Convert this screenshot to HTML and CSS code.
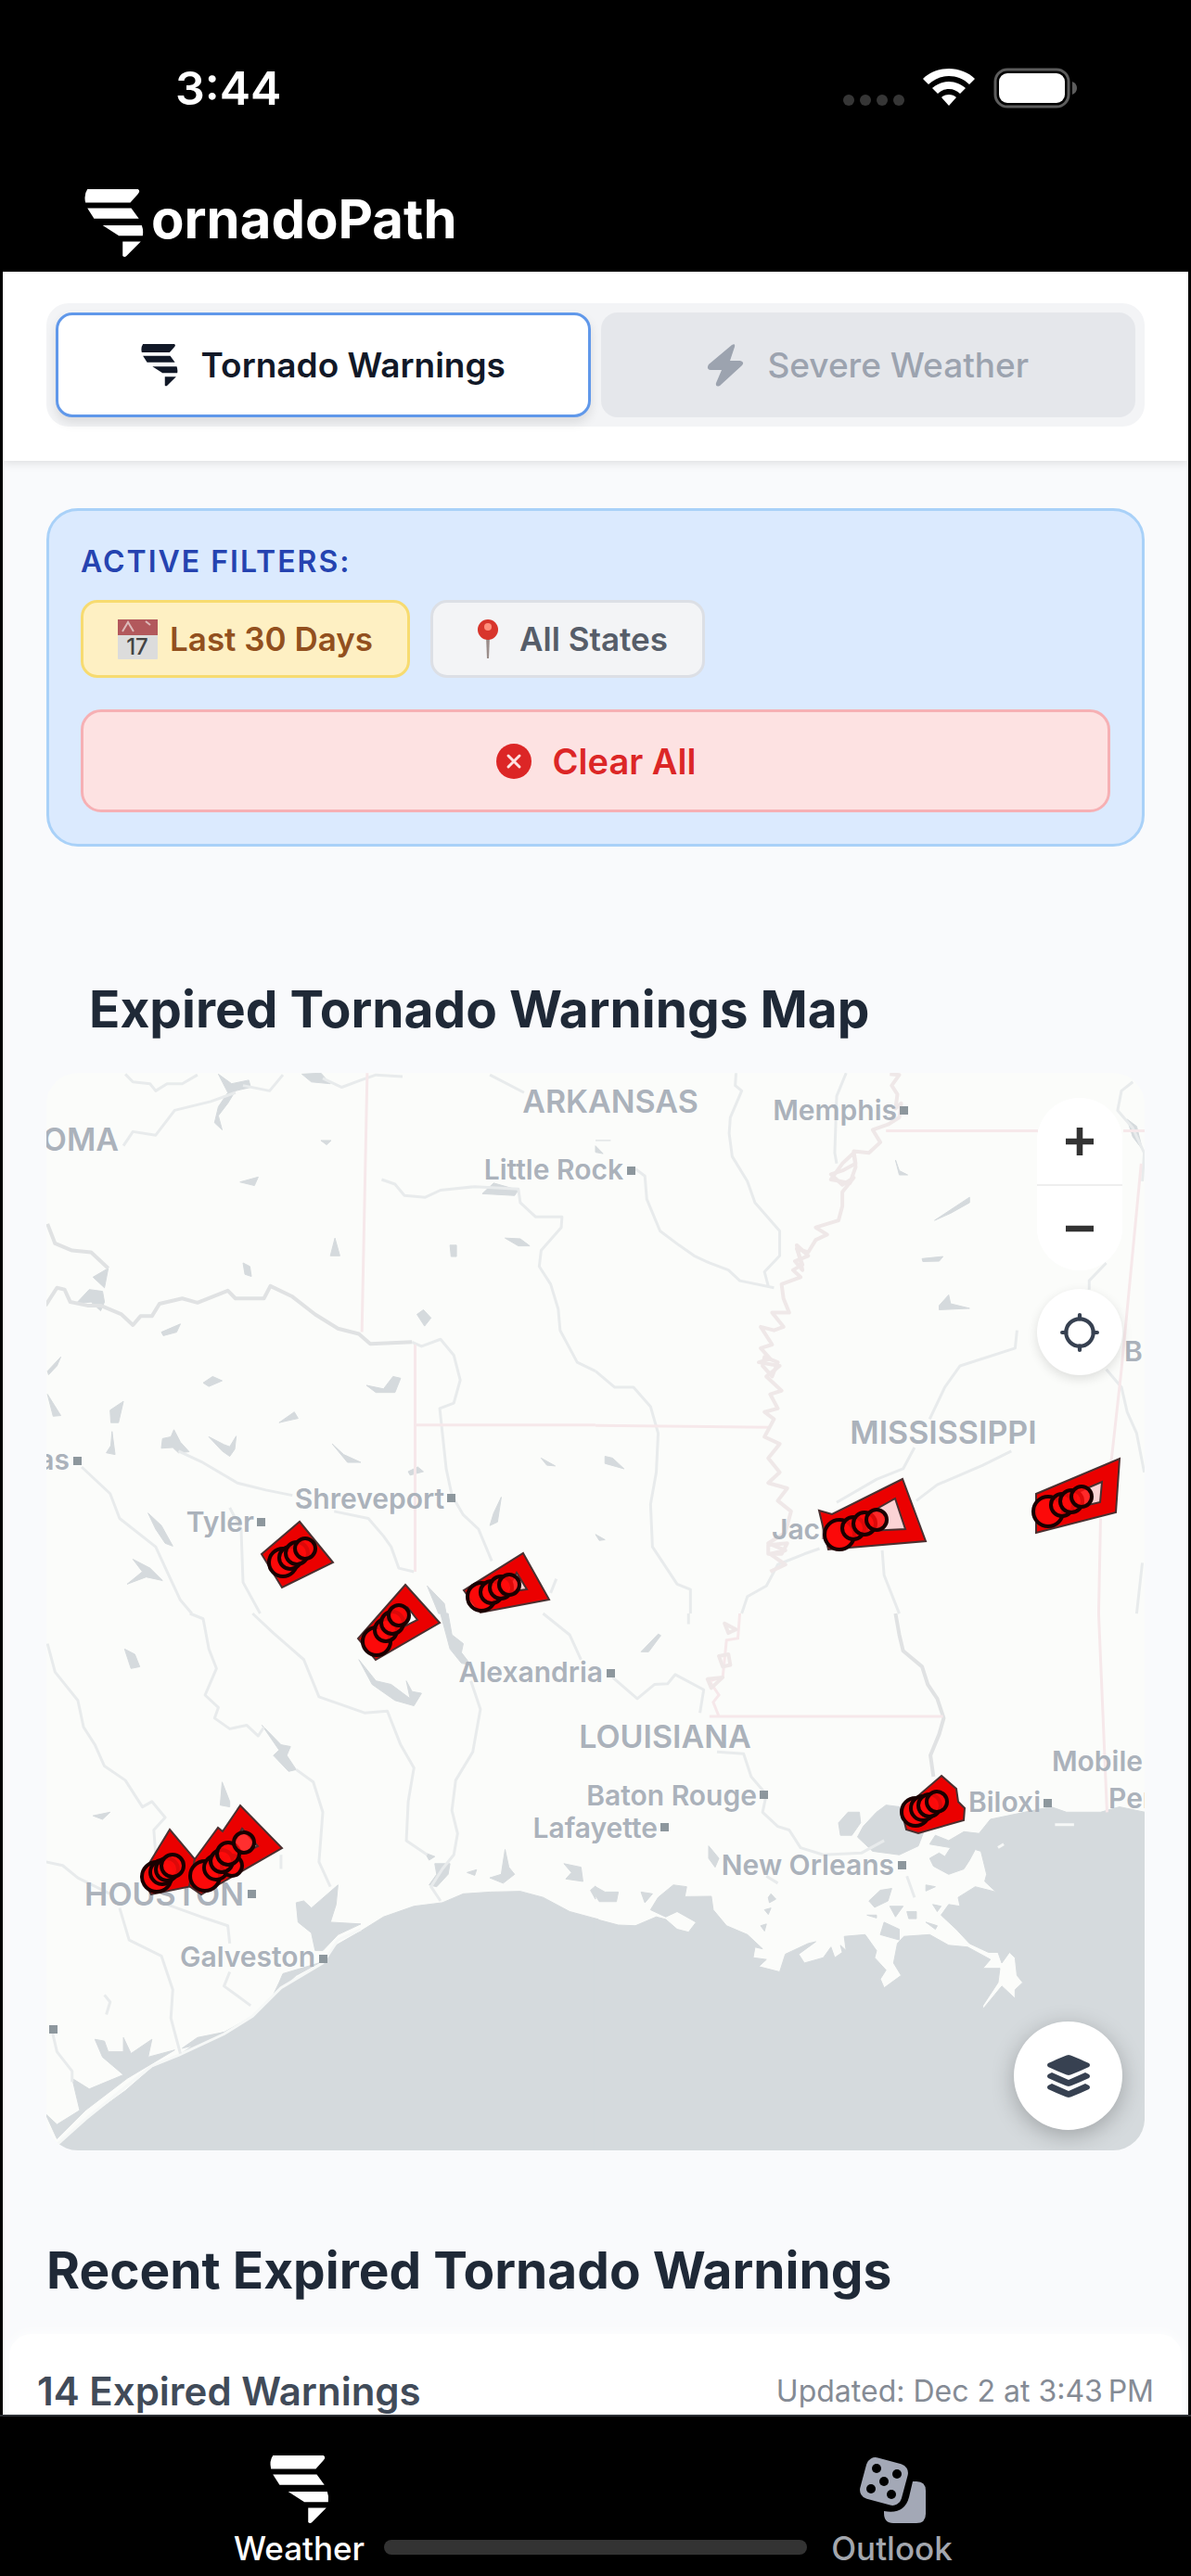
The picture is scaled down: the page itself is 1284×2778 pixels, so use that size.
FILE: index.html
```html
<!DOCTYPE html>
<html lang="en">
<head>
  <meta charset="utf-8">
  <meta name="viewport" content="width=device-width, initial-scale=1">
  <title>TornadoPath</title>
  <link rel="stylesheet" href="styles.css">
</head>
<body>

  <!-- shared tornado mark -->
  <svg class="defs" aria-hidden="true">
    <symbol id="tornado" viewBox="0 0 62 72">
      <path d="M3 0H56Q59 2 56 5L48 14H1Q-1 6 3 0ZM3 20H49L57 31H10ZM19 38H60Q62 43 61 49H36ZM40 55H59L44 70Q42 72 40 70Z"/>
    </symbol>
  </svg>

  <div class="app">
    <header class="top">
      <div class="status">
        <span class="time">3:44</span>
        <div class="status-icons">
          <span class="cell"><i></i><i></i><i></i><i></i></span>
          <svg class="wifi" viewBox="0 0 56 42">
            <path d="M28 0C17 0 7 4 0 11L6 17C12 11 20 8 28 8S44 11 50 17L56 11C49 4 39 0 28 0Z"/>
            <path d="M28 14C21 14 15 17 10 21L16 27C19 24 23 22 28 22S37 24 40 27L46 21C41 17 35 14 28 14Z"/>
            <path d="M28 28C25 28 22 29 20 31L28 40L36 31C34 29 31 28 28 28Z"/>
          </svg>
          <svg class="battery" viewBox="0 0 90 44">
            <rect x="2" y="2" width="79" height="40" rx="13" fill="none" stroke="#5c5c5c" stroke-width="3"/>
            <rect x="6" y="6" width="71" height="32" rx="9" fill="#fff"/>
            <path d="M85 15Q90 17 90 22T85 29Z" fill="#5c5c5c"/>
          </svg>
        </div>
      </div>
      <div class="brand">
        <svg class="brand-icon"><use href="#tornado"/></svg>
        <span class="brand-name">ornadoPath</span>
      </div>
    </header>

    <nav class="switcher">
      <div class="tabs">
        <button class="tab active" type="button">
          <svg class="tab-icon"><use href="#tornado"/></svg>
          Tornado Warnings
        </button>
        <button class="tab" type="button">
          <svg class="tab-icon" viewBox="0 0 40 46"><path d="M27 1Q31-1 30 3L25 18H36Q41 19 38 23L14 45Q9 47 10 42L16 28H4Q-1 27 2 22Z"/></svg>
          Severe Weather
        </button>
      </div>
    </nav>

    <main>
      <section class="filters">
        <h3 class="filters-title">Active Filters:</h3>
        <div class="chips">
          <span class="chip chip-date">
            <svg class="emoji" viewBox="0 0 43 43">
              <rect width="43" height="43" rx="1" fill="#dcdcdc"/>
              <rect width="43" height="17" fill="#b2585c"/>
              <path d="M5 13L11 3L17 13M30 2L35 6" stroke="#dcb9b9" stroke-width="2" fill="none"/>
              <text x="21" y="38" class="cal-day">17</text>
            </svg>
            Last 30 Days
          </span>
          <span class="chip">
            <svg class="emoji" viewBox="0 0 43 43">
              <path d="M20 18H24L23 42H21Z" fill="#9a8d8a"/>
              <circle cx="22" cy="11" r="11" fill="#d8352c"/>
              <circle cx="22" cy="8" r="4" fill="#ff8f7c"/>
            </svg>
            All States
          </span>
        </div>
        <button class="clear" type="button">
          <svg class="clear-icon" viewBox="0 0 40 40">
            <circle cx="20" cy="20" r="19" fill="#dc2626"/>
            <path d="M14 14L26 26M26 14L14 26" stroke="#fee2e2" stroke-width="3" stroke-linecap="round"/>
          </svg>
          Clear All
        </button>
      </section>

      <h2 class="map-title">Expired Tornado Warnings Map</h2>

      <div class="map">
        <svg class="map-canvas" viewBox="0 0 1184 1162" preserveAspectRatio="xMidYMid slice">
          <!-- north west tile -->
          <g class="tile" transform="translate(-50 -17) scale(.4094 .3827)">
            <g class="water">
              <path d="M795 48L845 45L870 75L820 70ZM575 48L610 75L655 65L660 85L620 95L600 130L575 165L585 205L565 185L575 140L600 100ZM845 235H872L860 247ZM632 352L680 338L670 362ZM640 580L658 590L662 618L645 612ZM882 510L895 560L870 560ZM1098 725L1115 712L1135 735L1118 758ZM1185 530H1202V562H1188ZM1330 510L1370 512L1395 532L1365 532ZM425 775L475 752L465 775L430 785ZM535 918L560 900L585 912L550 928ZM965 925L1010 935L1035 900L1055 905L1040 945L990 945ZM125 885L160 845L150 870L128 895ZM125 950L160 1010L140 1012ZM290 995L325 970L312 1030L292 1030ZM295 1055L303 1120L280 1115L292 1095ZM428 1075L450 1070L458 1050L475 1085L498 1112L470 1115L455 1100L425 1102ZM550 1070L590 1092L605 1098L622 1068L618 1105L605 1125L585 1110ZM735 1030L775 1000L785 1018L755 1025ZM875 1090L905 1120L950 1142L915 1142ZM1075 1168L1100 1155L1115 1168L1080 1178ZM1425 1130L1462 1152L1440 1150ZM1320 1240L1310 1310L1290 1320L1300 1285ZM390 1285L425 1320L455 1378L435 1370L410 1330ZM350 1415L395 1440L428 1475L385 1465L335 1485L375 1450ZM1300 355L1365 375L1355 390L1270 385ZM1125 1490L1170 1540L1175 1568H1155Z"/>
              <path d="M235 655L270 660L275 690L265 715L240 690L200 695ZM245 620L285 595L275 650Z"/>
            </g>
            <g class="river">
              <path d="M330 48L350 70L395 75L410 95L440 75H480L520 50M620 100L555 125L460 150L410 220L350 210L325 250M640 80L710 95L745 50M850 60L900 85L950 65L990 50L1060 55"/>
              <path d="M125 470L145 525L190 545L240 550L285 595M120 700L150 650L170 655L185 690L230 700L265 700L320 725L350 755L370 730L400 730L420 695L480 680L520 692L600 658L620 680L695 680L712 645L770 675L830 725L890 765L945 780L975 808L1085 803"  class="wide"/>
              <path d="M1085 803L1110 815L1160 795L1195 840L1212 910L1195 975L1158 990L1165 1060L1175 1160L1190 1235L1220 1290L1260 1330L1295 1420"/>
              <path d="M1005 345L1040 358L1065 390L1120 395L1160 375L1250 365L1365 372L1370 410L1410 450L1480 450L1478 480L1425 545L1420 590L1450 640L1470 710L1475 770L1520 860L1568 885"/>
              <path d="M470 1110L530 1140L625 1200L700 1220L770 1235M880 1280L970 1300L1010 1350L1030 1380L1050 1440L1090 1450M215 1155L290 1230L315 1300L410 1380L440 1450L475 1530L505 1568M605 1270L635 1330L640 1480L685 1568M1290 50L1380 100M1465 1470L1450 1510"/>
            </g>
            <path class="border" d="M967 45L953 775M1093 810V1450M1093 1037H1568"/>
          </g>

          <!-- north east tile -->
          <g class="tile" transform="translate(592 -17) scale(.4094 .3827)">
            <g class="water">
              <path d="M893 460L985 395L985 410L935 440ZM790 290L800 320L822 332L800 332ZM860 568L915 562L905 575L862 576ZM905 700L930 670L935 695L985 708L905 712ZM0 235L40 235M0 250L20 272L0 268ZM25 1125L45 1130L75 1160L25 1145ZM0 1345L25 1360L10 1362ZM1400 175L1425 195L1440 260L1415 225Z"/>
            </g>
            <g class="river">
              <path d="M370 45L368 80L385 95L355 170L352 215L360 280L400 350L420 410L485 490L485 560L445 605L455 645M105 315L130 335L135 400L170 490L220 530L260 560L300 580L350 600L380 630L470 650"/>
              <path d="M660 45L635 110L630 270L635 300M0 885L50 930L100 930L145 985L165 1060L160 1170L145 1260L150 1380L215 1485L250 1500V1568M1110 770L1105 820L960 870L920 930L880 1020M840 1100L810 1160L740 1190L635 1255M1095 1110L1020 1150L900 1205L845 1250M755 1390L760 1460L800 1568M1415 70L1385 95L1375 150L1415 200L1445 270L1440 350M1345 580L1300 630V655M1345 880L1385 930L1400 1000L1425 1060L1445 1170M1440 1425L1425 1568M590 1385L550 1400L480 1430L450 1490L400 1520L385 1568"/>
            </g>
            <g class="border">
              <path d="M765 208H1165M1390 208H1450M1437 300L1385 880L1355 1170M1330 1300L1325 1568M0 1038L460 1043"/>
              <path class="winding" d="M775 48L800 50L780 80L795 105L790 145L805 130L800 170L770 190L730 205L750 240L720 270L680 265L685 300L650 320L620 330L650 360L680 340L650 380L650 420L640 460L580 480L610 500L580 515L560 550L530 540L545 585L520 600L540 620L490 640L495 680L510 720L465 720L495 760L470 770L435 760L465 810L435 820L460 850L430 860L485 870L450 900L490 940L460 950L480 990L445 1000L470 1020L445 1070L485 1090L455 1130L485 1170L455 1200L505 1215L480 1250L515 1280L500 1340L455 1370L500 1390L460 1400L500 1430L460 1450"/>
              <path class="winding" d="M680 270L650 300L620 345L670 355L685 310ZM530 530L560 560L525 575L545 600ZM445 845L480 860L465 900L440 870ZM455 1375L505 1370L490 1400L455 1400Z"/>
            </g>
          </g>

          <!-- south west tile -->
          <g class="tile" transform="translate(-50 583) scale(.4094 .3827)">
            <g class="water">
              <path d="M100 1530V1515L155 1497L220 1430L330 1345L400 1280L470 1245L540 1195L590 1180L665 1135L705 1090L740 1055L800 1015L850 985L885 935L950 895L1010 855L1090 825L1165 815L1220 790L1290 785L1370 783L1430 800L1500 840L1576 862V1530Z"/>
              <path d="M780 815L800 810L820 830L890 765L885 820L870 870L950 875L890 905L850 950L830 950L820 900L785 870ZM745 1015L840 985L780 1020L715 1085L735 1040ZM480 1225L520 1195L590 1180L540 1210Z"/>
              <path d="M250 1200L275 1205L285 1235L325 1235L325 1195L345 1240L400 1200L390 1250L460 1230L335 1310L225 1400L150 1480L120 1410L150 1440L210 1400L190 1310L235 1340L325 1300L270 1250Z"/>
              <path d="M690 315L740 370L765 375L755 400L780 440L760 445L720 400L735 385ZM1160 0H1180L1190 60L1220 85L1215 110L1240 145L1215 140L1185 100ZM945 130L990 190L1030 200L1080 240L1070 190L1085 220L1110 225L1090 260L1040 245L980 200ZM1145 705H1185L1180 735L1150 770L1130 765L1150 735ZM1330 665L1340 715L1355 735L1325 760L1290 745L1320 735ZM1485 705L1530 715L1535 755L1490 748L1505 730ZM1555 780L1568 768V805ZM585 475L605 530L605 545L580 540ZM328 100L355 115L368 150L345 155ZM1230 730L1255 722L1250 738ZM245 570L290 560L270 580ZM1120 675L1145 685L1130 695Z"/>
            </g>
            <path class="sandbar" d="M150 1497L225 1425L335 1330L400 1275L470 1245L590 1185L665 1135L740 1055L850 985L890 920L950 890"/>
            <g class="river">
              <path d="M125 85L145 165L205 245L220 320L250 370L275 430L330 470L375 545L400 530L435 575L405 610L410 680M500 0L535 15L550 100L570 155L540 230L575 265L565 295L605 325L650 315L680 345L695 320M780 440L825 475L850 560L840 700L870 770M665 0L720 55L800 130L840 235L960 280L1020 275L1055 370L1090 435L1075 530L1070 640L1125 680M1240 190L1265 270L1245 390L1200 470L1190 555L1205 620L1195 680L1165 720L1135 770L1160 810"/>
              <path d="M315 830L340 920L425 965L455 1060L450 1140L475 1240M120 700L165 710L205 745L290 790M440 820L530 855L600 880L605 930M605 1010L590 1050L660 1105M138 1180L150 1235L190 1290V1320M740 680V720M1430 0L1500 60L1530 130M275 1075L290 1095L280 1130"/>
            </g>
          </g>

          <!-- south east tile -->
          <g class="tile" transform="translate(592 583) scale(.4094 .3827)">
            <g class="water">
              <path d="M-4 860L60 878L105 880L160 855L185 862L215 890L245 898L265 870L215 840L185 855L145 835L165 800L205 765L240 770L235 798L305 797L310 835L345 880L400 905L440 945L420 940L415 970L450 975L430 995L485 1010L500 960L560 930L580 925L535 960L550 985L600 970L590 985L620 940L630 970L650 955L645 935L660 950L655 910L710 905L740 950L735 970L765 1005L750 1030L760 1055L805 1020L785 985L795 930L812 910L880 905L930 935L980 940L1040 975L1020 1000L1065 1000L1060 1040L1020 1105V1115L1070 1050L1105 1085V1060L1125 1040L1110 1020L1105 970L1090 955L1070 985L1060 955L1035 955L985 930L950 890L910 850L930 820L960 825L955 800L1000 770L1055 785L1025 755L1030 735L1015 670L1000 665L985 695L970 720L930 735L890 712L880 690L905 675L920 685L935 660L880 650L895 625L930 640L970 615L1010 620L1040 580L1130 560L1200 545L1240 560L1330 560L1380 545L1447 560L1460 1530H-4Z"/>
              <path d="M690 630L705 600L740 560L765 540L840 550L870 600L850 655L800 680L730 670ZM640 590L665 560L695 560L698 590L675 625L645 625ZM720 810L750 780L780 775L770 810L735 828ZM760 870L800 890V920L750 905ZM820 840H845V860H825ZM870 765L895 770L870 782ZM775 825H810L790 855ZM715 850H740V858ZM870 870L900 880L895 890ZM888 820L910 825L900 840ZM0 770L25 785H60L55 812H10L0 795ZM120 785L150 790L130 815ZM455 800L462 790L475 805L458 815ZM445 835L462 830L455 848ZM435 880L450 875L445 895ZM298 655L325 690L315 715L298 690ZM120 108L165 58L172 62L140 108Z"/>
            </g>
            <path class="sandbar" d="M1060 660L1075 650M1210 595H1260"/>
            <g class="river">
              <path class="wide" d="M790 0L800 60L810 105L860 150L875 200L900 240L917 295L905 340L882 400L890 460"/>
              <path d="M45 180L110 240L155 200L190 198L210 172L285 215L275 280M320 390L390 395L410 460L450 510L440 560L480 600L510 610L540 660L600 680L700 675L760 640M450 740L480 760M820 740L840 800M245 0V30"/>
            </g>
            <g class="border">
              <path d="M300 290H915M1325 0L1347 560M380 0L375 70L345 75L335 180L300 190L325 230L310 250L325 290"/>
              <path class="winding" d="M340 28L370 45L350 55ZM325 120L350 115L355 145L335 150ZM295 185L335 180L305 210Z"/>
            </g>
          </g>

          <g class="states">
            <text x="78" y="84" text-anchor="end">OKLAHOMA</text>
            <text x="608" y="43" text-anchor="middle">ARKANSAS</text>
            <text x="967" y="400" text-anchor="middle">MISSISSIPPI</text>
            <text x="667" y="728" text-anchor="middle">LOUISIANA</text>
            <text x="213" y="898" text-anchor="end">HOUSTON</text>
          </g>
          <g class="cities" text-anchor="end">
            <text x="917" y="51">Memphis</text>
            <text x="622" y="115">Little Rock</text>
            <text x="25" y="428">Dallas</text>
            <text x="224" y="495">Tyler</text>
            <text x="429" y="470">Shreveport</text>
            <text x="600" y="657">Alexandria</text>
            <text x="766" y="790">Baton Rouge</text>
            <text x="659" y="825">Lafayette</text>
            <text x="914" y="865">New Orleans</text>
            <text x="1072" y="797">Biloxi</text>
            <text x="290" y="964">Galveston</text>
            <text x="1182" y="753">Mobile</text>
          </g>
          <g class="cities">
            <text x="782" y="503">Jackson</text>
            <text x="1162" y="311">B</text>
            <text x="1145" y="793">Pensacola</text>
          </g>
          <path class="dots" d="M920 36h9v9h-9zM626 101h9v9h-9zM29 414h9v9h-9zM227 480h9v9h-9zM432 454h9v9h-9zM604 643h9v9h-9zM769 774h9v9h-9zM662 809h9v9h-9zM918 850h9v9h-9zM1075 783h9v9h-9zM294 951h9v9h-9zM217 881h9v9h-9zM3 1027h9v9h-9z"/>

          <!-- expired warning polygons -->
          <path class="inner-zone" d="M507 539L518 557L495 560ZM915 459L926 492L885 494V476ZM1138 441L1136 463L1110 469V453Z"/>
          <g class="warning">
            <path d="M273 484L309 528L254 555L232 519Z"/>
            <path d="M387 552L424 593L355 633L336 610ZM390 577L400 590L386 597Z"/>
            <path d="M514 518L542 568L468 582L450 558ZM507 539L518 557L495 560Z"/>
            <path d="M833 472L847 476L923 438L948 505L843 514ZM915 459L926 492L885 494V476Z"/>
            <path d="M1067 454L1157 416L1153 474L1067 496ZM1138 441L1136 463L1110 469V453Z"/>
            <path d="M965 758L981 772L983 786L990 793L989 806L940 820L927 816L922 795Z"/>
            <path d="M133 816L160 848L157 877L113 886L102 867Z"/>
            <path d="M160 848L185 814L190 818L209 790L254 836L167 886L154 877ZM211 815L228 834L212 842L202 830Z"/>
          </g>
          <g class="track">
            <circle cx="255" cy="528" r="15"/><circle cx="263" cy="523" r="12"/><circle cx="270" cy="518" r="12"/><circle cx="279" cy="513" r="11"/>
            <circle cx="356" cy="613" r="15"/><circle cx="366" cy="601" r="12"/><circle cx="373" cy="593" r="12"/><circle cx="380" cy="585" r="11"/>
            <circle cx="469" cy="565" r="15"/><circle cx="480" cy="560" r="12"/><circle cx="490" cy="555" r="12"/><circle cx="499" cy="552" r="11"/>
            <circle cx="855" cy="498" r="16"/><circle cx="870" cy="491" r="12"/><circle cx="882" cy="486" r="12"/><circle cx="895" cy="482" r="11"/>
            <circle cx="1080" cy="473" r="16"/><circle cx="1095" cy="466" r="12"/><circle cx="1105" cy="462" r="12"/><circle cx="1116" cy="457" r="11"/>
            <circle cx="937" cy="797" r="15"/><circle cx="945" cy="793" r="13"/><circle cx="952" cy="790" r="12"/><circle cx="960" cy="786" r="11"/>
            <circle cx="119" cy="867" r="16"/><circle cx="125" cy="862" r="13"/><circle cx="130" cy="859" r="12"/><circle cx="136" cy="855" r="12"/>
            <circle cx="171" cy="866" r="16"/><circle cx="183" cy="857" r="13"/><circle cx="200" cy="855" r="11"/><circle cx="189" cy="850" r="12"/><circle cx="196" cy="842" r="12"/><circle cx="213" cy="830" r="11"/>
          </g>
        </svg>

        <div class="map-controls">
          <div class="zoom">
            <button type="button" aria-label="Zoom in"><svg viewBox="0 0 32 32"><path d="M16 0V32M0 16H32"/></svg></button>
            <button type="button" aria-label="Zoom out"><svg viewBox="0 0 32 32"><path d="M0 16H32"/></svg></button>
          </div>
          <button class="locate" type="button" aria-label="My location">
            <svg viewBox="0 0 40 40"><circle cx="20" cy="20" r="14"/><path d="M20 2V6M20 34V38M2 20H6M34 20H38"/></svg>
          </button>
        </div>
        <button class="layers" type="button" aria-label="Layers">
          <svg viewBox="0 0 48 48">
            <path d="M24 1Q26 1 46 10Q48 12 46 14Q26 23 24 23T2 14Q0 12 2 10Q22 1 24 1Z"/>
            <path d="M2 22L6 20L24 28L42 20L46 22Q48 24 46 26Q26 35 24 35T2 26Q0 24 2 22Z"/>
            <path d="M2 34L6 32L24 40L42 32L46 34Q48 36 46 38Q26 47 24 47T2 38Q0 36 2 34Z"/>
          </svg>
        </button>
      </div>

      <h2 class="recent-title">Recent Expired Tornado Warnings</h2>

      <section class="list">
        <span class="count">14 Expired Warnings</span>
        <span class="updated">Updated: Dec 2 at 3:43&#8239;PM</span>
      </section>
    </main>

    <nav class="bottom">
      <a class="bottom-item active" href="#">
        <svg><use href="#tornado"/></svg>
        Weather
      </a>
      <a class="bottom-item" href="#">
        <svg viewBox="0 0 74 74">
          <path d="M59 28H63Q73 28 73 38V63Q73 73 63 73H38Q28 73 28 62V60Q50 64 55 45Z"/>
          <rect x="5" y="5" width="46" height="46" rx="10" transform="rotate(15 28 28)"/>
          <g fill="#000"><circle cx="20" cy="14" r="5"/><circle cx="42" cy="20" r="5"/><circle cx="28" cy="28" r="5"/><circle cx="14" cy="36" r="5"/><circle cx="36" cy="42" r="5"/></g>
        </svg>
        Outlook
      </a>
      <span class="home-bar"></span>
    </nav>
  </div>

</body>
</html>
```
FILE: styles.css
```css
* {
    box-sizing: border-box;
}

body {
    margin: 0;
    background: #000;
    font-family: Inter, "Liberation Sans", sans-serif;
    color: #1f2937;
}

h2, h3 {
    margin: 0;
}

button {
    font-family: inherit;
    padding: 0;
    margin: 0;
}

.defs {
    position: absolute;
    width: 0;
    height: 0;
}

.app {
    display: flex;
    flex-direction: column;
    height: 100vh;
    padding: 0 3px;
    overflow: hidden;
}

/* header */

.top {
    flex: none;
    background: #000;
    color: #fff;
    padding-bottom: 15px;
}

.status {
    display: flex;
    align-items: center;
    justify-content: space-between;
    height: 190px;
    padding: 0 120px 0 186px;
}

.time {
    font-size: 50px;
    font-weight: 600;
}

.status-icons {
    display: flex;
    align-items: center;
    gap: 20px;
}

.cell {
    display: flex;
    gap: 6px;
    padding-top: 26px;
}

.cell i {
    width: 12px;
    height: 12px;
    border-radius: 50%;
    background: #363636;
}

.wifi {
    width: 56px;
    height: 42px;
    fill: #fff;
}

.battery {
    width: 90px;
    height: 44px;
}

.brand {
    display: flex;
    align-items: flex-start;
    gap: 8px;
    padding: 14px 88px 0;
}

.brand-icon {
    width: 64px;
    height: 74px;
    fill: #fff;
}

.brand-name {
    font-size: 58px;
    font-weight: 700;
    line-height: 64px;
}

/* tornado / severe switch */

.switcher {
    flex: none;
    background: #fff;
    padding: 34px 47px 37px;
    box-shadow: 0 2px 10px rgba(0, 0, 0, 0.12);
    z-index: 1;
}

.tabs {
    display: flex;
    gap: 11px;
    padding: 10px;
    background: #f3f4f6;
    border-radius: 24px;
}

.tab {
    flex: 1;
    display: flex;
    align-items: center;
    justify-content: center;
    gap: 25px;
    height: 113px;
    border: 3px solid transparent;
    border-radius: 18px;
    background: #e5e7eb;
    color: #9ca3af;
    font-size: 37px;
    font-weight: 500;
}

.tab.active {
    background: #fff;
    border-color: #6098ea;
    color: #111827;
    font-weight: 600;
    box-shadow: 0 6px 12px rgba(0, 0, 0, 0.1);
}

.tab-icon {
    width: 40px;
    height: 46px;
    fill: currentColor;
}

main {
    flex: 1;
    min-height: 0;
    overflow: hidden;
    background: #f9fafc;
    padding: 51px 47px 0;
}

/* filters */

.filters {
    background: #dbeafe;
    border: 3px solid #a9d1f8;
    border-radius: 34px;
    padding: 35px 34px 34px;
}

.filters-title {
    font-size: 32px;
    font-weight: 600;
    line-height: 40px;
    letter-spacing: 2px;
    text-transform: uppercase;
    color: #2543b0;
}

.chips {
    display: flex;
    gap: 22px;
    margin: 21px 0 34px;
}

.chip {
    display: flex;
    align-items: center;
    gap: 13px;
    height: 84px;
    padding: 0 37px;
    border: 3px solid #dcdfe5;
    border-radius: 18px;
    background: #f3f4f6;
    color: #565d69;
    font-size: 35px;
    font-weight: 600;
}

.chip-date {
    background: #fef0c3;
    border-color: #f7db70;
    color: #92501e;
}

.emoji {
    width: 43px;
    height: 43px;
}

.cal-day {
    font-size: 24px;
    font-weight: 500;
    fill: #444;
    text-anchor: middle;
}

.clear {
    display: flex;
    align-items: center;
    justify-content: center;
    gap: 22px;
    width: 100%;
    height: 111px;
    border: 3px solid #f6b0b4;
    border-radius: 22px;
    background: #fde2e2;
    color: #dc2626;
    font-size: 38px;
    font-weight: 600;
}

.clear-icon {
    width: 40px;
    height: 40px;
}

/* map */

.map-title, .recent-title {
    font-size: 55px;
    font-weight: 700;
    line-height: 72px;
}

.map-title {
    margin: 139px 0 33px 46px;
}

.map {
    position: relative;
    border-radius: 34px;
    overflow: hidden;
    background: #fbfcfa;
}

.map-canvas {
    display: block;
    width: 100%;
    height: auto;
}

.tile path {
    vector-effect: non-scaling-stroke;
}

.water {
    fill: #d5dadd;
    stroke: #d5dadd;
    stroke-width: 1;
    stroke-linejoin: round;
}

.river {
    fill: none;
    stroke: #e8ebec;
    stroke-width: 3;
    stroke-linejoin: round;
}

.river .wide {
    stroke: #e0e2e3;
    stroke-width: 4;
}

.border {
    fill: none;
    stroke: #f6e8ea;
    stroke-width: 3;
}

.border .winding {
    stroke: #efe8e8;
    stroke-width: 4;
    stroke-linejoin: round;
}

.sandbar {
    fill: none;
    stroke: #f6f8f7;
    stroke-width: 3;
}

.states {
    font-size: 34px;
    font-weight: 600;
    fill: #abb2bb;
}

.cities {
    font-size: 30px;
    font-weight: 600;
    fill: #abb2bb;
}

.dots {
    fill: #8d979d;
}

.inner-zone {
    fill: #fbd3d5;
}

.warning {
    fill: #eb0000;
    fill-rule: evenodd;
    stroke: #4a3030;
    stroke-width: 2;
}

.track {
    fill: rgba(255, 10, 10, 0.85);
    stroke: #1a0000;
    stroke-width: 4;
}

.map-controls {
    position: absolute;
    top: 27px;
    right: 24px;
    display: flex;
    flex-direction: column;
    gap: 20px;
}

.zoom {
    border-radius: 46px;
    overflow: hidden;
    background: #fff;
}

.map-controls button {
    display: flex;
    align-items: center;
    justify-content: center;
    width: 92px;
    height: 93px;
    border: 0;
    background: #fff;
}

.zoom button + button {
    border-top: 2px solid #eeeeee;
}

.zoom svg {
    width: 30px;
    height: 30px;
    stroke: #333;
    stroke-width: 7;
}

.map-controls .locate {
    border-radius: 50%;
    box-shadow: 0 4px 12px rgba(0, 0, 0, 0.12);
}

.locate svg {
    width: 42px;
    height: 42px;
    fill: none;
    stroke: #374151;
    stroke-width: 4;
    stroke-linecap: round;
}

.layers {
    position: absolute;
    right: 24px;
    bottom: 22px;
    display: flex;
    align-items: center;
    justify-content: center;
    width: 117px;
    height: 117px;
    border: 0;
    border-radius: 50%;
    background: #fff;
    box-shadow: 0 6px 24px rgba(0, 0, 0, 0.25);
}

.layers svg {
    width: 48px;
    height: 48px;
    fill: #374151;
}

/* recent list */

.recent-title {
    margin: 93px 0 33px;
}

.list {
    display: flex;
    align-items: center;
    justify-content: space-between;
    margin: 0 -40px;
    padding: 32px 30px;
    border-radius: 24px;
    background: #fff;
    box-shadow: 0 0 16px #fff;
}

.count {
    font-size: 42px;
    font-weight: 600;
    line-height: 60px;
    color: #414b59;
}

.updated {
    font-size: 32px;
    line-height: 60px;
    color: #858b95;
}

/* bottom navigation */

.bottom {
    flex: none;
    position: relative;
    display: flex;
    margin: 0 -3px;
    padding: 42px 3px 10px;
    border-top: 2px solid #2b2e33;
    background: #000;
    z-index: 1;
}

.bottom-item {
    flex: 1;
    display: flex;
    flex-direction: column;
    align-items: center;
    gap: 6px;
    font-size: 35px;
    font-weight: 500;
    line-height: 40px;
    color: #a3a7ae;
    fill: #a3a8b6;
    text-decoration: none;
}

.bottom-item.active {
    color: #fff;
    fill: #fff;
}

.bottom-item svg {
    width: 74px;
    height: 74px;
}

.home-bar {
    position: absolute;
    left: 50%;
    bottom: 23px;
    width: 456px;
    height: 16px;
    margin-left: -228px;
    border-radius: 8px;
    background: #333;
}
```
